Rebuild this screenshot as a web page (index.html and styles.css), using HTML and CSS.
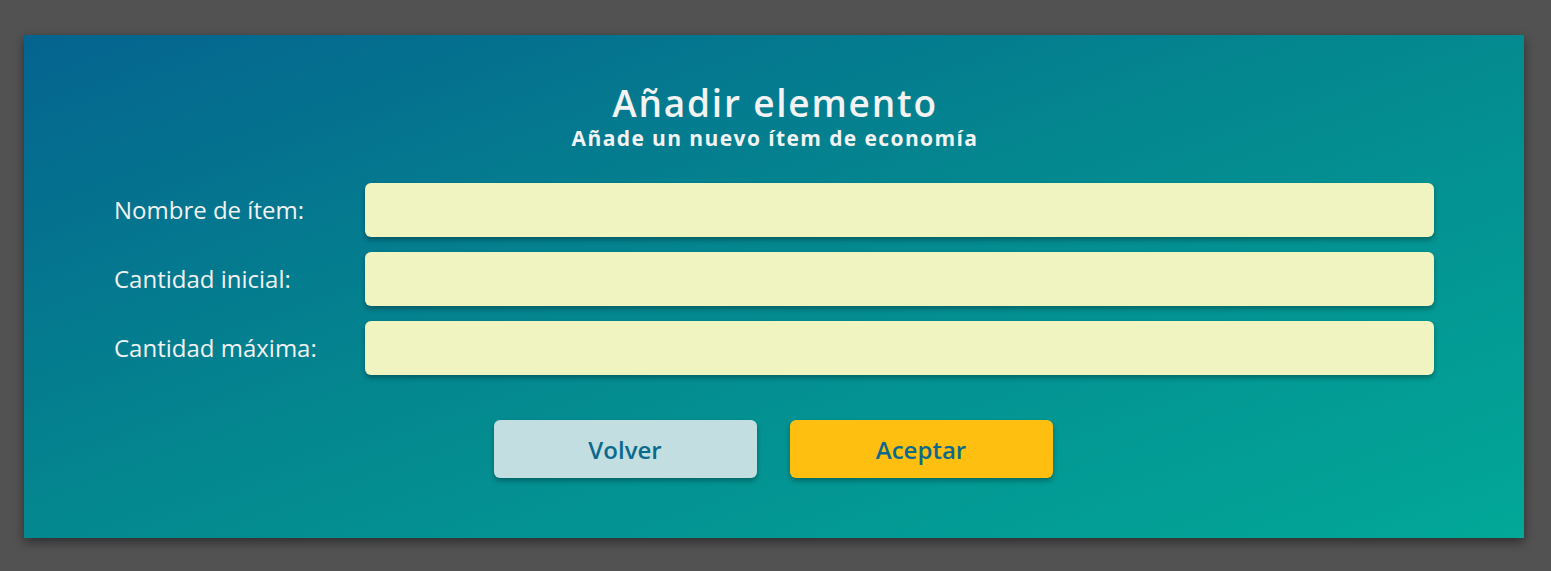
FILE: index.html
```html
<!DOCTYPE html>
<html lang="es">
<head>
<meta charset="utf-8">
<title>Añadir elemento</title>
<link rel="stylesheet" href="styles.css">
</head>
<body>
<div class="card">
  <header class="head">
    <h1 class="title">Añadir elemento</h1>
    <p class="subtitle">Añade un nuevo ítem de economía</p>
  </header>
  <form class="form">
    <label class="label" for="f1">Nombre de ítem:</label>
    <input class="field" id="f1" type="text">
    <label class="label" for="f2">Cantidad inicial:</label>
    <input class="field" id="f2" type="text">
    <label class="label" for="f3">Cantidad máxima:</label>
    <input class="field" id="f3" type="text">
  </form>
  <div class="actions">
    <button class="btn btn-back" type="button">Volver</button>
    <button class="btn btn-ok" type="button">Aceptar</button>
  </div>
</div>
</body>
</html>
```
FILE: styles.css
```css
html, body {
  margin: 0;
  padding: 0;
}
body {
  background: #525252;
  font-family: "Open Sans", "DejaVu Sans", sans-serif;
  padding: 35px 27px 33px 24px;
  height: 571px;
  box-sizing: border-box;
  overflow: hidden;
}
.card {
  width: 1500px;
  height: 503px;
  box-sizing: border-box;
  background: linear-gradient(160deg, #05648f 0%, #04868f 45%, #02a898 100%);
  box-shadow: 0 4px 10px rgba(0,0,0,0.45);
  padding: 46px 90px 0 90px;
}
.head {
  text-align: center;
  color: #f3f3f3;
}
.title {
  margin: 0;
  font-size: 37px;
  line-height: 44px;
  font-weight: 600;
  letter-spacing: 1.8px;
  padding-left: 2px;
}
.subtitle {
  margin: 1px 0 0;
  font-size: 21px;
  line-height: 25px;
  font-weight: 700;
  letter-spacing: 1.4px;
  padding-left: 2px;
}
.form {
  margin-top: 32px;
  display: grid;
  grid-template-columns: 251px 1fr;
  row-gap: 15px;
  align-items: center;
}
.label {
  color: #f2f2f2;
  font-size: 24px;
  font-weight: 400;
  padding-bottom: 1px;
}
.field {
  height: 54px;
  border: none;
  border-radius: 6px;
  background: #f0f4c0;
  box-shadow: 0 3px 5px rgba(0,0,0,0.3);
  margin: 0;
  padding: 0 12px;
  font-size: 20px;
  outline: none;
}
.actions {
  margin-top: 45px;
  display: flex;
  justify-content: center;
  gap: 33px;
  padding-right: 2px;
}
.btn {
  width: 263px;
  height: 58px;
  border: none;
  border-radius: 6px;
  padding: 0;
  font-family: inherit;
  font-size: 24px;
  font-weight: 600;
  color: #0b6a8c;
  box-shadow: 0 3px 5px rgba(0,0,0,0.3);
  cursor: pointer;
}
.btn-back {
  background: #c2dee0;
}
.btn-ok {
  background: #ffbf10;
}
```
